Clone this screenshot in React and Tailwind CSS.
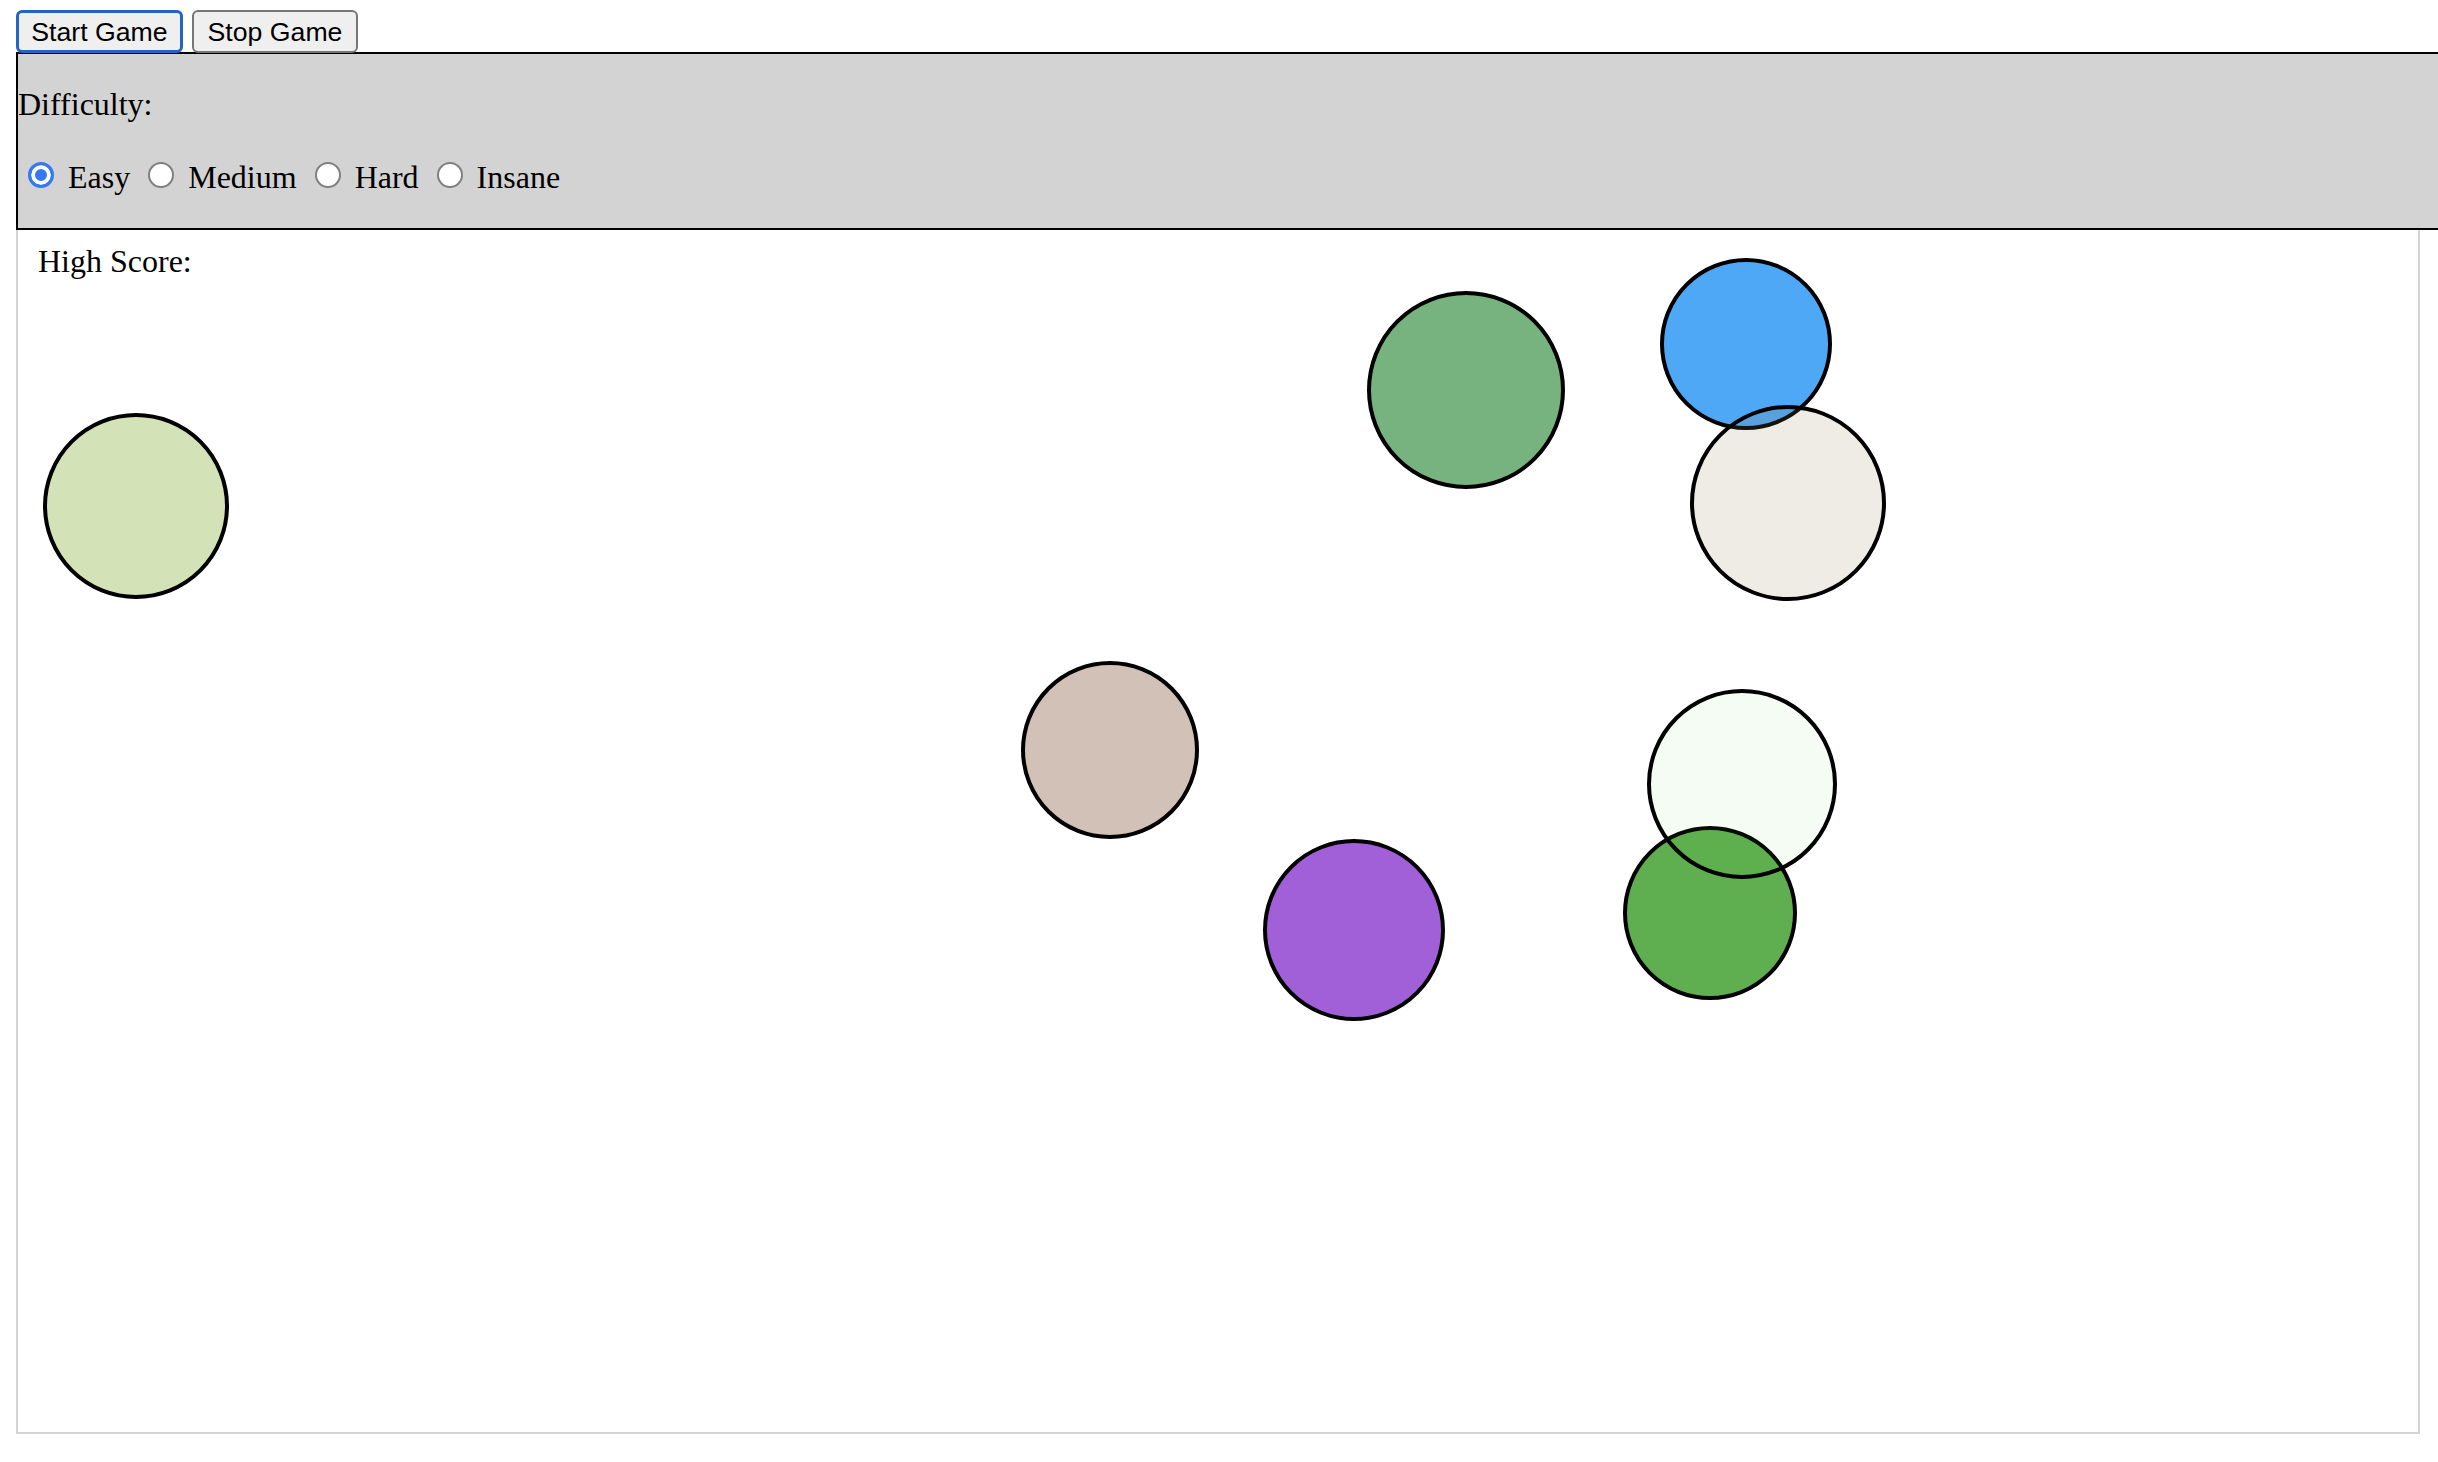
import React, { useState } from "react";

const circles = [
  { cx: 136, cy: 506, r: 91, fill: "#d4e2b7" },
  { cx: 1466, cy: 390, r: 97, fill: "#76b37e" },
  { cx: 1746, cy: 344, r: 84, fill: "#4fa8f5" },
  { cx: 1788, cy: 503, r: 96, fill: "rgba(148,122,82,0.15)" },
  { cx: 1110, cy: 750, r: 87, fill: "#d1c1b6" },
  { cx: 1354, cy: 930, r: 89, fill: "#a260d8" },
  { cx: 1710, cy: 913, r: 85, fill: "#5fae4f" },
  { cx: 1742, cy: 784, r: 93, fill: "rgba(88,205,55,0.06)" },
];

const levels = ["Easy", "Medium", "Hard", "Insane"];

const App = () => {
  const [difficulty, setDifficulty] = useState("Easy");

  return (
    <div className="min-h-screen w-full overflow-hidden bg-white text-black font-['Liberation_Serif',serif]">
      {/* Controls */}
      <div className="flex h-[52px] items-start gap-[9px] pl-[16px] pt-[10px]">
        <button className="flex h-[43px] w-[167px] items-center justify-center rounded-[6px] border-[3px] border-[#2364c8] bg-[#efefef] font-['Liberation_Sans',Arial,sans-serif] text-[26.67px] text-black">
          Start Game
        </button>
        <button className="flex h-[43px] w-[166px] items-center justify-center rounded-[6px] border-2 border-[#767676] bg-[#efefef] font-['Liberation_Sans',Arial,sans-serif] text-[26.67px] text-black">
          Stop Game
        </button>
      </div>

      {/* Difficulty panel */}
      <div className="ml-[16px] border-y-2 border-l-2 border-black bg-[#d3d3d3] pb-[33px] pt-[32px] text-[32px]">
        <div className="leading-[36px]">Difficulty:</div>
        <div className="mt-[37px] flex items-start leading-[36px]">
          {levels.map((level) => (
            <label key={level} className="flex items-start">
              <input
                type="radio"
                name="difficulty"
                checked={difficulty === level}
                onChange={() => setDifficulty(level)}
                className="m-0 ml-[10px] mr-[14px] mt-[3px] h-[26px] w-[26px] shrink-0 appearance-none rounded-full border-2 border-[#808080] bg-white checked:border-[3px] checked:border-[#3478f6] checked:bg-[#3478f6] checked:shadow-[inset_0_0_0_4px_#fff]"
              />
              <span className="mr-[8px]">{level}</span>
            </label>
          ))}
        </div>
      </div>

      {/* Game area */}
      <div className="relative ml-[16px] h-[1204px] w-[2404px] border-2 border-t-0 border-[#d3d3d3] text-[32px]">
        <div className="pl-[20px] pt-[13px] leading-[36px]">High Score:</div>
        <svg
          className="absolute inset-0"
          width="2400"
          height="1202"
          viewBox="18 230 2400 1202"
        >
          {circles.map((c, i) => (
            <circle
              key={i}
              cx={c.cx}
              cy={c.cy}
              r={c.r}
              fill={c.fill}
              stroke="#000"
              strokeWidth="4"
            />
          ))}
        </svg>
      </div>
    </div>
  );
};

export default App;
